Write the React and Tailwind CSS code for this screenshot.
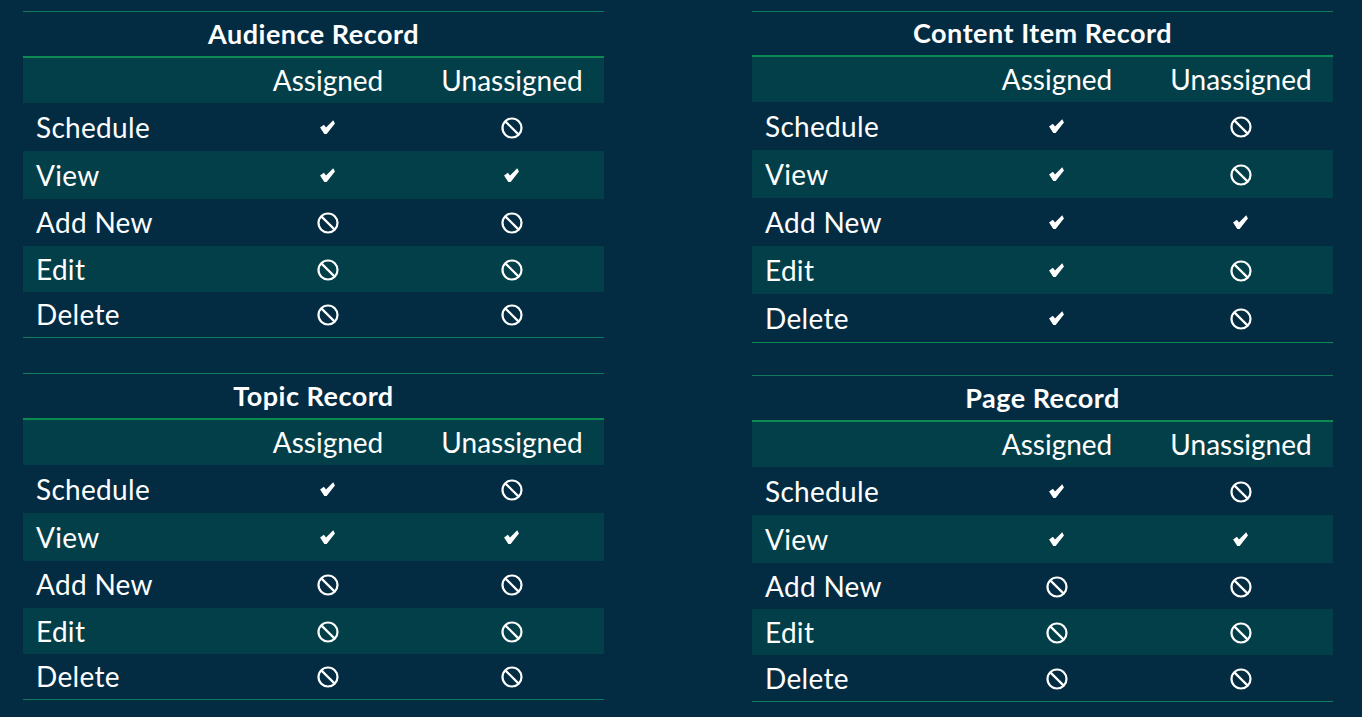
const Check = () => (
  <svg width="17" height="16" viewBox="0 0 16 15" fill="#fff" className="-translate-x-[1px]">
    <path d="M1 8 L4.6 5.4 L6.6 8 L13.4 1.2 L15 4.2 L7.2 14 L5 14 Z" />
  </svg>
)

const Ban = () => (
  <svg width="22" height="22" viewBox="0 0 22 22" fill="none" stroke="#fff" strokeWidth="2.2" className="mt-[1px]">
    <circle cx="11" cy="11" r="9.5" />
    <path d="M4.6 4.6 L17.4 17.4" />
  </svg>
)

const tables = {
  audience: {
    title: 'Audience Record',
    titleHeight: 'h-[45px]',
    lastLine: 'border-[#127a5e]',
    rows: [
      ['Schedule', 1, 0, 'h-[48px]'],
      ['View', 1, 1, 'h-[48px]'],
      ['Add New', 0, 0, 'h-[47px]'],
      ['Edit', 0, 0, 'h-[46px]'],
      ['Delete', 0, 0, 'h-[45px]'],
    ],
  },
  topic: {
    title: 'Topic Record',
    titleHeight: 'h-[45px]',
    lastLine: 'border-[#127a5e]',
    rows: [
      ['Schedule', 1, 0, 'h-[48px]'],
      ['View', 1, 1, 'h-[48px]'],
      ['Add New', 0, 0, 'h-[47px]'],
      ['Edit', 0, 0, 'h-[46px]'],
      ['Delete', 0, 0, 'h-[45px]'],
    ],
  },
  content: {
    title: 'Content Item Record',
    titleHeight: 'h-[44px]',
    lastLine: 'border-[#0b8a52]',
    rows: [
      ['Schedule', 1, 0, 'h-[48px]'],
      ['View', 1, 0, 'h-[48px]'],
      ['Add New', 1, 1, 'h-[48px]'],
      ['Edit', 1, 0, 'h-[48px]'],
      ['Delete', 1, 0, 'h-[48px]'],
    ],
  },
  page: {
    title: 'Page Record',
    titleHeight: 'h-[45px]',
    lastLine: 'border-[#127a5e]',
    rows: [
      ['Schedule', 1, 0, 'h-[48px]'],
      ['View', 1, 1, 'h-[48px]'],
      ['Add New', 0, 0, 'h-[46px]'],
      ['Edit', 0, 0, 'h-[46px]'],
      ['Delete', 0, 0, 'h-[46px]'],
    ],
  },
}

const RecordTable = ({ data, className }) => (
  <div className={`w-[581px] ${className || ''}`}>
    <div className={`${data.titleHeight} border-t border-[#127a5e] flex items-center justify-center text-[27px] font-bold tracking-[0.5px]`}>
      {data.title}
    </div>
    <div className="h-[2px] bg-[#0b8a52]"></div>
    <div className="grid grid-cols-[213px_184px_184px] items-center bg-[#033f48] h-[45px] tracking-normal">
      <div></div>
      <div className="text-center pb-[2px]">Assigned</div>
      <div className="text-center pb-[2px]">Unassigned</div>
    </div>
    {data.rows.map(([label, a, u, h], i) => (
      <div key={label} className={`grid grid-cols-[213px_184px_184px] items-center ${h} ${i % 2 ? 'bg-[#033f48]' : ''}`}>
        <div className="pl-[13px] pb-[1px]">{label}</div>
        <div className="flex justify-center">{a ? <Check /> : <Ban />}</div>
        <div className="flex justify-center">{u ? <Check /> : <Ban />}</div>
      </div>
    ))}
    <div className={`border-t ${data.lastLine}`}></div>
  </div>
)

export default function App() {
  return (
    <div className="h-[717px] overflow-hidden bg-[#032c43] text-white text-[28px] tracking-[0.3px] font-['Lato','Liberation_Sans',sans-serif] pt-[11px] pl-[23px] flex gap-[148px]">
      <div className="flex flex-col">
        <RecordTable data={tables.audience} />
        <RecordTable data={tables.topic} className="mt-[35px]" />
      </div>
      <div className="flex flex-col">
        <RecordTable data={tables.content} />
        <RecordTable data={tables.page} className="mt-[32px]" />
      </div>
    </div>
  )
}
